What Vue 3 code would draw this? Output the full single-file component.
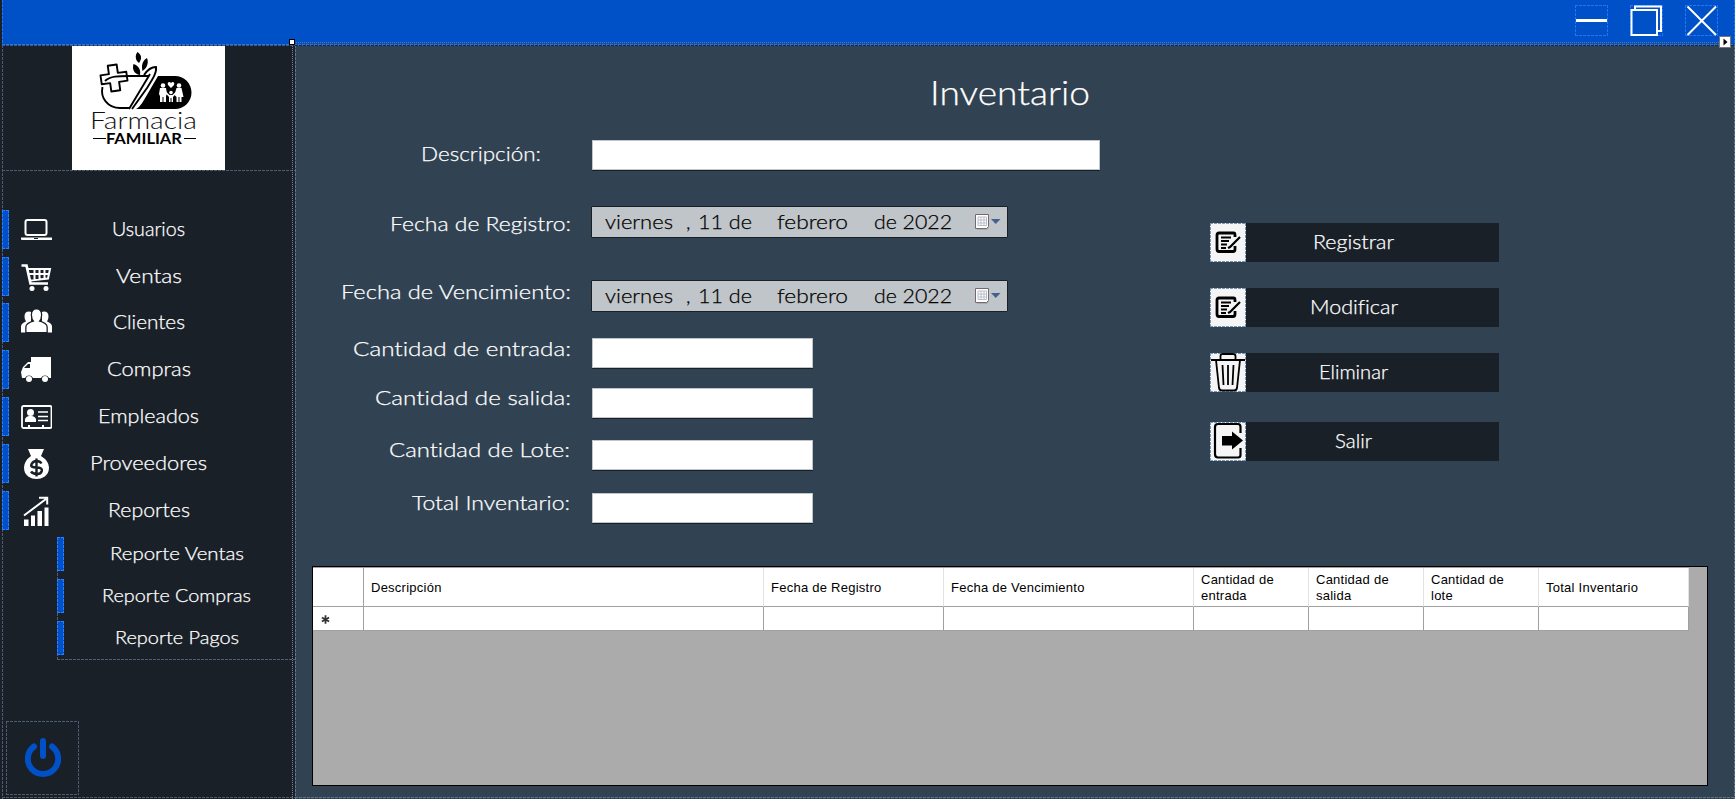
<script setup>
// Widens a label so that it takes exactly the given width.
const vFit = {
  mounted(el, { value }) {
    el.style.display = 'inline-block'
    const natural = el.getBoundingClientRect().width
    el.style.width = `${value}px`
    el.style.textAlign = 'left'
    el.style.transformOrigin = '0 50%'
    el.style.transform = `scaleX(${value / natural})`
  }
}

const menu = [
  { label: 'Usuarios', icon: 'laptop', w: 73 },
  { label: 'Ventas', icon: 'cart', w: 66 },
  { label: 'Clientes', icon: 'people', w: 72 },
  { label: 'Compras', icon: 'truck', w: 84 },
  { label: 'Empleados', icon: 'card', w: 101 },
  { label: 'Proveedores', icon: 'bag', w: 117 },
  { label: 'Reportes', icon: 'chart', w: 82 }
]
const reports = [
  { label: 'Reporte Ventas', w: 134 },
  { label: 'Reporte Compras', w: 149 },
  { label: 'Reporte Pagos', w: 124 }
]
const fields = [
  { key: 'desc', label: 'Descripción:', w: 120 },
  { key: 'reg', label: 'Fecha de Registro:', w: 181, date: true },
  { key: 'ven', label: 'Fecha de Vencimiento:', w: 230, date: true },
  { key: 'ent', label: 'Cantidad de entrada:', w: 218 },
  { key: 'sal', label: 'Cantidad de salida:', w: 196 },
  { key: 'lot', label: 'Cantidad de Lote:', w: 181 },
  { key: 'tot', label: 'Total Inventario:', w: 158 }
]
const actions = [
  { label: 'Registrar', icon: 'edit', w: 81 },
  { label: 'Modificar', icon: 'edit', w: 88 },
  { label: 'Eliminar', icon: 'trash', w: 69 },
  { label: 'Salir', icon: 'exit', w: 37 }
]
const columns = ['Descripción', 'Fecha de Registro', 'Fecha de Vencimiento', 'Cantidad de entrada', 'Cantidad de salida', 'Cantidad de lote', 'Total Inventario']
</script>

<template>
  <div class="window">
    <header class="titlebar dash">
      <svg class="win dash" viewBox="0 0 33 31"><path d="M1 15.500h31" stroke-width="3" /></svg>
      <svg class="win dash" viewBox="0 0 33 31"><path d="M5 5V1.500H31V26H27.500M1.500 5V30H27V5Z" stroke-width="2" fill="none" /></svg>
      <svg class="win dash" viewBox="0 0 33 31"><path d="M2.500 1.500L31 30M31 1.500L2.500 30" stroke-width="2" /></svg>
    </header>

    <div class="body">
      <aside class="sidebar">
        <div class="brand">
          <div class="logo">
            <svg viewBox="0 1 153 124">
              <g fill="none" stroke="#000" stroke-width="1.900">
                <path transform="rotate(-8 42 33)" d="M37.500 20h9v8.500H55v9h-8.500V46h-9v-8.500H29v-9h8.500z" stroke-linejoin="round" />
                <path d="M33 36C38 31 47 31 57 31H77" />
                <path d="M72 30C76 24 80 22 84 22C85 28 80 35 75 43L60 64M78 29L57 64M30.500 42C28 53 36 63 48 63H57" />
              </g>
              <path d="M67 18c-4-3-4-8-1.500-11C70 10 70 14 67 18zM68 30C62 29 60 24 61.500 19 67 21 69 25 68 30zM70.500 26C69 20 71 15 75 13 77 18 75 23 70.500 26z" />
              <path d="M86 31H103a16.500 16.500 0 0 1 0 33H64q4-2 8-9z" />
              <g fill="#fff">
                <circle cx="91" cy="40.500" r="2.300" /><path d="M88 43h6l1 6-1 2v6h-2.500v-5h-1v5H88v-6l-1-2z" />
                <circle cx="107" cy="40.500" r="2.300" /><path d="M104.500 43h5l2 9h-2v5h-2v-5h-1v5h-2v-5l-2-2z" />
                <circle cx="99" cy="47.500" r="1.800" /><path d="M93.500 46l4 4h3l4-4v2l-3.500 4v5h-1.500v-4h-1v4H97v-5l-3.500-4zM99 43l-3-3q-1-3 1.500-3 1.500 0 1.500 1.500 0-1.500 1.500-1.500 2.500 0 1.500 3z" />
              </g>
              <text class="name" x="18" y="84" textLength="107" lengthAdjust="spacingAndGlyphs">Farmacia</text>
              <path d="M21 93.500h13M112 93.500h12" stroke="#000" />
              <text class="surname" x="34" y="99" textLength="76" lengthAdjust="spacingAndGlyphs">FAMILIAR</text>
            </svg>
          </div>
        </div>

        <nav class="menu">
          <div v-for="m in menu" :key="m.label" class="item">
            <i class="bar dash"></i>
            <svg class="icon" viewBox="0 0 32 32">
              <template v-if="m.icon === 'laptop'">
                <rect x="5.500" y="6" width="21" height="15" rx="2" fill="none" stroke="#fff" stroke-width="2" />
                <path d="M1 23.500H32V26H2Q1 26 1 25z" /><path d="M14 24.500h4" stroke="#1a2028" />
              </template>
              <template v-else-if="m.icon === 'cart'">
                <path d="M1.500 4.500H6.500L10.500 22.500H28" fill="none" stroke="#fff" stroke-width="2.700" />
                <path d="M7.500 8H30L28 17.500L10 19.500M14.500 8v11M19.500 8v10.500M24.500 8v10M8.500 13H29" fill="none" stroke="#fff" stroke-width="2" />
                <circle cx="12" cy="27.500" r="2.500" /><circle cx="26" cy="27.500" r="2.500" />
              </template>
              <template v-else-if="m.icon === 'people'">
                <path d="M4.500 10q0-5 4.500-5 3 0 3 2-2 7 0 11-5 2-5 8H1v-6q0-3 5-5-1.500-2-1.500-5zM28.500 10q0-5-4.500-5-3 0-3 2 2 7 0 11 5 2 5 8H32v-6q0-3-5-5 1.500-2 1.500-5z" transform="translate(0 -.5)" />
                <path d="M12 8q0-5.500 4.500-5.500T21 8q0 4-2.500 6.500 8 2 8 5.500v5h-20v-5q0-3.500 8-5.500Q12 12 12 8z" stroke="#1a2028" stroke-width="2.600" paint-order="stroke" />
              </template>
              <template v-else-if="m.icon === 'truck'">
                <path d="M11 3H31V24H29a4.500 4.500 0 0 0-8 0H13a4.500 4.500 0 0 0-8 0H2L1 18 3 13 8 8H11z" /><path d="M4 14l4-4h2v4z" fill="#1a2028" />
                <circle cx="9" cy="25" r="3" /><circle cx="25" cy="25" r="3" />
              </template>
              <template v-else-if="m.icon === 'card'">
                <rect x="2" y="5" width="29.500" height="22" rx="1.500" fill="none" stroke="#fff" stroke-width="1.800" />
                <circle cx="10.500" cy="11.500" r="3.500" /><path d="M5 21q-1-5 4-6h3q5 1 4 6zM8 24h2v2H8zM22 24h2v2h-2z" />
                <path d="M18 11h10M18 15.500h10M18 19.500h10" stroke="#fff" stroke-width="1.500" />
              </template>
              <template v-else-if="m.icon === 'bag'">
                <path d="M8 1H24l-3 7H11zM11 8H21Q29 13 29 19.500C29 28 22 31 16.500 31S4 28 4 19.500Q4 13 11 8z" />
                <path d="M21.500 15.500Q20 13 16.500 13T11.500 16.200 16.500 19.500 21.800 23 16.500 26 11 23.500M16.500 10.500V28.500" fill="none" stroke="#1a2028" stroke-width="2.400" />
              </template>
              <template v-else>
                <path d="M4 24.500h4.500v6.500H4zM11 20.500h4v10.500h-4zM17.500 16h4.500v15h-4.500zM24.500 12.500h4v18.500h-4z" />
                <path d="M4 20.500L26 4M19 2.800H27.200V9.500" fill="none" stroke="#fff" stroke-width="2" />
              </template>
            </svg>
            <span class="caption"><span v-fit="m.w">{{ m.label }}</span></span>
          </div>
        </nav>

        <nav class="reports">
          <div v-for="r in reports" :key="r.label" class="report">
            <i class="bar dash"></i>
            <span class="caption"><span v-fit="r.w">{{ r.label }}</span></span>
          </div>
        </nav>

        <div class="power dash">
          <svg viewBox="0 0 36 42"><path d="M9 9.500A15.200 15.200 0 1 0 27 9.500M18 4V19" /></svg>
        </div>
      </aside>

      <main class="content">
        <h1><span v-fit="160">Inventario</span></h1>
        <div class="columns">
          <form class="form">
            <div v-for="f in fields" :key="f.key" class="row" :class="f.key">
              <label><span v-fit="f.w">{{ f.label }}</span></label>
              <div v-if="f.date" class="date">
                <span v-fit="68" class="day">viernes</span>
                <span class="comma">,</span>
                <span v-fit="54" class="num">11 de</span>
                <span v-fit="71" class="month">febrero</span>
                <span v-fit="78" class="year">de 2022</span>
                <svg viewBox="0 0 26 17">
                  <path d="M2 2h12v12l-2 2H2z" fill="#999" opacity=".6" />
                  <path d="M.5.5H13.500V12.500L11.500 14.500H.5z" fill="#fff" stroke="#75696c" />
                  <path d="M3 3h8.500v8.500H3zM3 6h8.500M3 9h8.500M6 3v8.500M9 3v8.500" fill="none" stroke="#b9bdcb" />
                  <path d="M16 5h9.500l-4.750 5z" fill="#465f91" />
                </svg>
              </div>
              <input v-else type="text">
            </div>
          </form>

          <div class="actions">
            <button v-for="a in actions" :key="a.label" type="button">
              <svg class="dash" viewBox="0 0 36 39">
                <template v-if="a.icon === 'edit'">
                  <g fill="none" stroke="#000"><path d="M25 14V12Q25 10 23.500 10H9Q7 10 7 12V26Q7 28.500 9 28.500H23Q25 28.500 25 26V23" stroke-width="2.800" />
                  <path d="M11 14.500h10M11 18h8M11 21.500h6M11 25h5" stroke-width="1.900" /><path d="M30 14L20 24l-2 1" stroke-width="2.200" /></g>
                </template>
                <template v-else-if="a.icon === 'trash'">
                  <path d="M1 7H35M10.500 6V3Q10.500 1 12.500 1H23Q25.500 1 25.500 3V6M6 7L9 35Q9.500 37.500 12 37.500H24Q26.500 37.500 27 35L30 7M12.500 12l1 20M18 12V32M23.500 12l-1 20" fill="none" stroke="#000" stroke-width="1.800" />
                </template>
                <template v-else>
                  <path d="M30.500 11V5Q30.500 2 28 2H8Q5 2 5 5V32Q5 35.500 8 35.500H28Q30.500 35.500 30.500 33V26" fill="none" stroke="#000" stroke-width="2.200" /><path d="M12 14H22V9.500L33 18.500 22 27.500V23.500H12z" />
                </template>
              </svg>
              <span class="text"><span v-fit="a.w">{{ a.label }}</span></span>
            </button>
          </div>
        </div>

        <div class="grid-view">
          <div class="grid-row head">
            <span></span>
            <span v-for="c in columns" :key="c">{{ c }}</span>
          </div>
          <div class="grid-row">
            <span class="star"><svg viewBox="0 0 8 8"><path d="M4 .3V7.700M.8 2.200L7.200 5.800M7.200 2.200L.8 5.800" /></svg></span>
            <span v-for="c in columns" :key="c"></span>
          </div>
        </div>
      </main>
    </div>
    <i class="guide-h"></i>
    <i class="guide-v"></i>
    <i class="handle"></i>
    <svg class="smart" viewBox="0 0 12 12"><rect x=".5" y=".5" width="11" height="11" fill="#fff" stroke="#777" /><path d="M4.500 2.500L8.500 6 4.500 9.500z" /></svg>
  </div>
</template>

<style>
body { margin: 0; overflow: hidden; }
</style>

<style scoped>
* { box-sizing: border-box; }
.window {
  position: relative; width: 1735px; height: 799px; padding-left: 2px;
  display: flex; flex-direction: column; background: #1a2028; color: #fff;
  font-family: Lato, "Liberation Sans", sans-serif; font-weight: 300;
  font-variant-ligatures: none; -webkit-text-stroke: .25px currentColor;
}
/* one-pixel designer outline: three pixels on, one off */
.dash {
  --h: repeating-linear-gradient(90deg, var(--dash) 0 3px, transparent 3px 4px);
  --v: repeating-linear-gradient(var(--dash) 0 3px, transparent 3px 4px);
  background-image: var(--h), var(--h), var(--v), var(--v);
  background-size: 100% 1px, 100% 1px, 1px 100%, 1px 100%;
  background-position: 0 0, 0 100%, 0 0, 100% 0;
  background-repeat: no-repeat;
}
.titlebar {
  --dash: #2174f5; height: 45px; flex: none; display: flex; gap: 22px;
  padding: 5px 17px 0 0; justify-content: flex-end; background-color: #0050c8;
  background-position: 0 -5px, 0 100%, 0 0, 100% 0;
}
.win { width: 33px; height: 31px; stroke: #fff; }
.body { flex: 1; display: flex; min-height: 0; }
.sidebar {
  width: 293px; padding-top: 1px; display: flex; flex-direction: column; flex: none;
  --dash: #4b5b70;
  background:
    repeating-linear-gradient(90deg, #4b5b70 0 3px, transparent 3px 4px) 0 0 / 100% 1px no-repeat,
    repeating-linear-gradient(#4b5b70 0 3px, transparent 3px 4px) 0 0 / 1px 100% no-repeat,
    repeating-linear-gradient(90deg, #4b5b70 0 3px, transparent 3px 4px) 0 752px / 100% 1px no-repeat,
    #1a2028;
}
.brand {
  height: 125px; padding-left: 70px;
  background: repeating-linear-gradient(90deg, #4b5b70 0 3px, transparent 3px 4px) 0 100% / 100% 1px no-repeat;
}
.logo { width: 153px; height: 124px; background: #fff; }
.logo svg { display: block; width: 153px; height: 124px; }
.logo text { -webkit-text-stroke: 0; }
.name { font: 300 23.500px Lato, sans-serif; fill: #111; }
.surname { font: 700 15.500px Lato, sans-serif; }
.menu { padding-top: 39px; display: grid; grid-template-rows: 47px 46px 47px 47px 47px 47px 39px; }
.item { display: flex; align-items: flex-start; }
.bar { --dash: #2880ff; width: 7px; height: 39px; flex: none; background-color: #0050c8; }
.icon { width: 32px; height: 32px; margin: 4px 0 0 11px; fill: #fff; }
.caption { flex: 1; text-align: center; white-space: nowrap; }
.item .caption { font-size: 19px; line-height: 24px; padding: 7px 50px 0 0; }
.reports {
  margin: 7px 0 0 55px; height: 123px; display: grid; grid-auto-rows: 34px; row-gap: 8px;
  background:
    repeating-linear-gradient(#4f5e70 0 3px, transparent 3px 4px) 0 0 / 1px 100% no-repeat,
    repeating-linear-gradient(90deg, #4f5e70 0 3px, transparent 3px 4px) 0 100% / 100% 1px no-repeat;
}
.report { display: flex; }
.report .bar { height: 34px; }
.report .caption { margin-left: -6px; font-size: 17px; line-height: 34px; }
.power { width: 73px; height: 74px; margin: 61px 0 0 4px; display: grid; place-items: center; }
.power svg { width: 36px; height: 42px; fill: none; stroke: #0050c8; stroke-width: 6; stroke-linecap: round; }
.content {
  flex: 1; display: flex; flex-direction: column; min-width: 0;
  background:
    repeating-linear-gradient(90deg, #1f2935 0 3px, #55605f 3px 4px) 0 0 / 100% 1px no-repeat,
    repeating-linear-gradient(#5c7592 0 3px, transparent 3px 4px) 0 0 / 1px 100% no-repeat,
    repeating-linear-gradient(#5c7592 0 3px, transparent 3px 4px) 100% 0 / 1px 100% no-repeat,
    repeating-linear-gradient(90deg, #5c7592 0 3px, transparent 3px 4px) 0 752px / 100% 1px no-repeat,
    #314252;
}
h1 { margin: 27px 0 0 635px; height: 68px; font-weight: 300; font-size: 33px; line-height: 40px; }
.columns { display: flex; height: 426px; }
.form { width: 915px; flex: none; }
.row { display: grid; grid-template-columns: 276px 1fr; column-gap: 21px; align-items: start; }
label { text-align: right; font-size: 20px; line-height: 24px; white-space: nowrap; }
input {
  display: block; width: 221px; height: 30px; padding: 0; border: 1px solid #c0c5c9; border-radius: 0;
  outline: 0; background: #fff; box-shadow: 0 1px #1a2028;
}
.desc { height: 66px; }
.desc input { width: 508px; }
.desc label { padding: 1px 30px 0 0; }
.reg { height: 74px; }
.reg label { padding-top: 5px; }
.ven { height: 58px; }
.ven label { margin-top: -1px; }
.ent { height: 50px; }
.ent label { margin-top: -2px; }
.sal { height: 52px; }
.lot { height: 53px; }
.sal label, .lot label, .tot label { margin-top: -3px; }
.lot label, .tot label { padding-right: 1px; }
.date {
  display: flex; align-items: flex-start; width: 417px; height: 32px; margin-left: -1px; padding-left: 13px;
  border: 1px solid #1a2028; border-radius: 1px; background: #c0c5c9; color: #000;
  font-size: 20px; line-height: 28px; white-space: nowrap;
}
.comma { width: 5px; margin: 0 7px 0 13px; }
.month { margin-left: 25px; }
.year { margin-left: 26px; }
.date svg { width: 26px; height: 17px; margin: 7px 0 0 23px; }
.actions { padding-top: 83px; }
button {
  display: flex; width: 289px; height: 39px; margin-bottom: 26px; padding: 0; border: 0;
  background: #1a2028; color: #fff; font: inherit; font-size: 19px;
}
button:nth-child(3) { margin-bottom: 30px; }
button svg { --dash: #7896b5; width: 36px; height: 39px; flex: none; background-color: #f5f5f5; }
.text { flex: 1; line-height: 38px; padding-right: 38px; text-align: center; }
.grid-view {
  width: 1396px; height: 220px; margin-left: 17px; border: 1px solid #000; background: #ababab;
  color: #000; font: 400 13px/16px "Liberation Sans", Arial, sans-serif; -webkit-text-stroke: 0;
}
.grid-row {
  display: grid; grid-template-columns: 51px 400px 180px 250px 115px 115px 115px 150px;
  width: 1376px; height: 24px; letter-spacing: .25px;
}
.grid-row > span { display: flex; align-items: center; padding: 0 30px 0 7px; background: #fff; border: solid #a0a0a0; border-width: 0 1px 1px 0; }
.head { height: 40px; border-top: 1px solid #a0a0a0; }
.head > span { padding-top: 1px; }
.head > span + span { border-right-color: #e3e3e3; }
.head > span:nth-child(2), .head > span:nth-child(3), .head > span:nth-child(4), .head > span:nth-child(8) { white-space: nowrap; }
.star svg { width: 9px; height: 9px; flex: none; margin: 1px 0 0 1px; stroke: #333; stroke-width: 1.600; }
.guide-h { position: absolute; left: 296px; right: 16px; top: 42px; height: 1px; background: repeating-linear-gradient(90deg, #76756c 0 1px, transparent 1px 2px); }
.guide-v { position: absolute; left: 292px; top: 46px; bottom: 0; width: 1px; background: repeating-linear-gradient(#858585 0 1px, transparent 1px 2px); }
.handle { position: absolute; left: 289px; top: 39px; width: 6px; height: 6px; background: #fff; border: 1px solid #000; }
.smart { position: absolute; left: 1719px; top: 36px; width: 12px; height: 12px; }
</style>
